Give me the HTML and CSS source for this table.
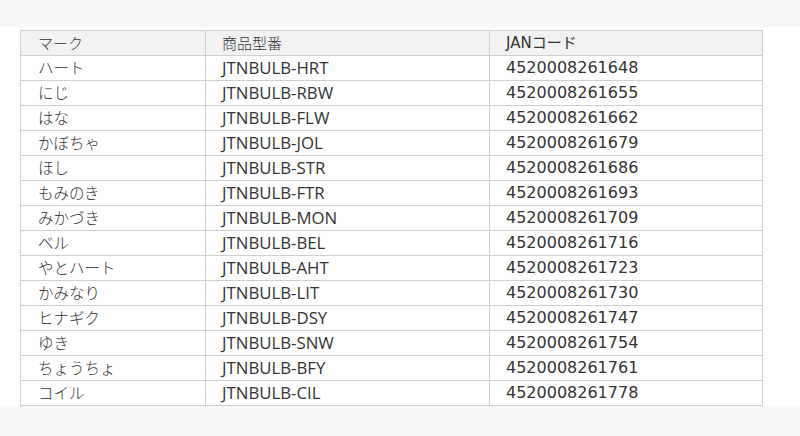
FILE: index.html
```html
<!DOCTYPE html>
<html lang="ja">
<head>
<meta charset="utf-8">
<link rel="stylesheet" href="styles.css">
</head>
<body>
<section class="sheet">
<table class="spec">
<thead>
<tr><th class="c1">マーク</th><th class="c2">商品型番</th><th class="c3">JANコード</th></tr>
</thead>
<tbody>
<tr><td>ハート</td><td class="model">JTNBULB-HRT</td><td class="jan">4520008261648</td></tr>
<tr><td>にじ</td><td class="model">JTNBULB-RBW</td><td class="jan">4520008261655</td></tr>
<tr><td>はな</td><td class="model">JTNBULB-FLW</td><td class="jan">4520008261662</td></tr>
<tr><td>かぼちゃ</td><td class="model">JTNBULB-JOL</td><td class="jan">4520008261679</td></tr>
<tr><td>ほし</td><td class="model">JTNBULB-STR</td><td class="jan">4520008261686</td></tr>
<tr><td>もみのき</td><td class="model">JTNBULB-FTR</td><td class="jan">4520008261693</td></tr>
<tr><td>みかづき</td><td class="model">JTNBULB-MON</td><td class="jan">4520008261709</td></tr>
<tr><td>ベル</td><td class="model">JTNBULB-BEL</td><td class="jan">4520008261716</td></tr>
<tr><td>やとハート</td><td class="model">JTNBULB-AHT</td><td class="jan">4520008261723</td></tr>
<tr><td>かみなり</td><td class="model">JTNBULB-LIT</td><td class="jan">4520008261730</td></tr>
<tr><td>ヒナギク</td><td class="model">JTNBULB-DSY</td><td class="jan">4520008261747</td></tr>
<tr><td>ゆき</td><td class="model">JTNBULB-SNW</td><td class="jan">4520008261754</td></tr>
<tr><td>ちょうちょ</td><td class="model">JTNBULB-BFY</td><td class="jan">4520008261761</td></tr>
<tr><td>コイル</td><td class="model">JTNBULB-CIL</td><td class="jan">4520008261778</td></tr>
</tbody>
</table>
</section>
</body>
</html>
```
FILE: styles.css
```css
html, body {
  margin: 0;
  padding: 0;
}
body {
  background: #f8f8f8;
  font-family: "Noto Sans CJK JP", "Open Sans", sans-serif;
  color: #333;
  font-size: 16px;
}
.sheet {
  margin-top: 27px;
  background: #fff;
  padding: 3px 0 0 20px;
  height: 379px;
  box-sizing: border-box;
}
.spec {
  border-collapse: collapse;
  table-layout: fixed;
  width: 742px;
}
.spec tr {
  height: 25px;
}
.spec th, .spec td {
  box-sizing: border-box;
  border: 1px solid #cfcfcf;
  height: 25px;
  padding: 0 0 0 17px;
  text-align: left;
  font-weight: 300;
  line-height: 22px;
  white-space: nowrap;
  overflow: hidden;
  vertical-align: middle;
}
.spec th {
  background: #f2f2f2;
  font-size: 15px;
}
.c1 { width: 185px; }
.c2 { width: 284px; }
.c3 { width: 273px; }
.spec td.model, .spec th.c2, .spec td.jan, .spec th.c3 {
  padding-left: 16px;
}
.spec td.model {
  font-family: "Open Sans", sans-serif;
  font-weight: 400;
  font-size: 16.8px;
}
.spec td.jan, .spec th.c3 {
  font-family: "DejaVu Sans", "Noto Sans CJK JP", sans-serif;
  font-weight: 400;
}
.spec td:first-child {
  font-size: 15.5px;
  padding-bottom: 2px;
}
```
